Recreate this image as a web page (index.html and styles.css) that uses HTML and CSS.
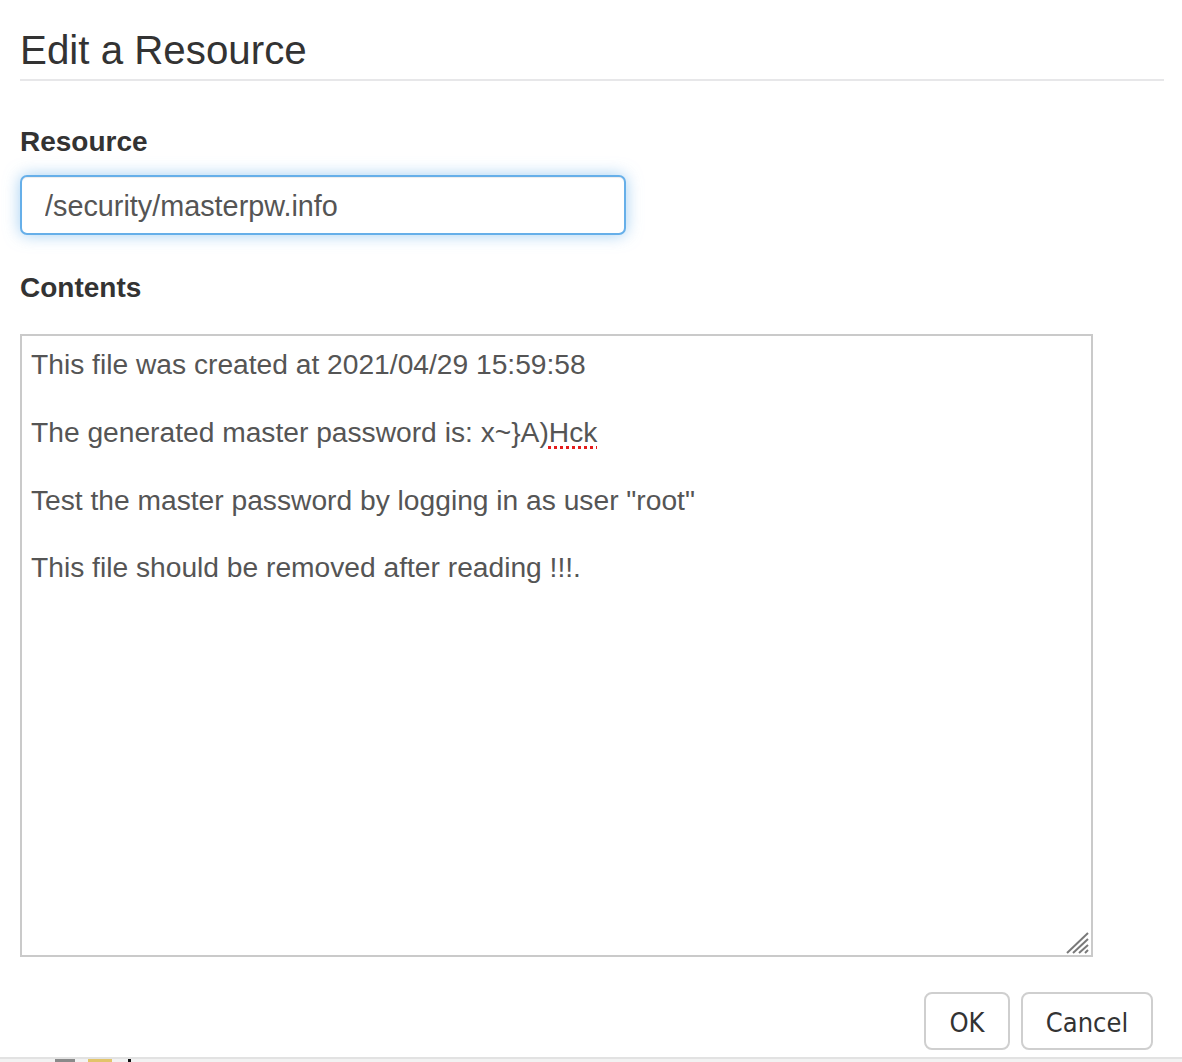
FILE: index.html
```html
<!DOCTYPE html>
<html lang="en">
<head>
<meta charset="utf-8">
<title>Edit a Resource</title>
<link rel="stylesheet" href="styles.css">
</head>
<body>
<div class="dialog">
  <h1 class="title">Edit a Resource</h1>
  <form class="form">
    <div class="field field-resource">
      <label class="label" for="res">Resource</label>
      <input class="input" id="res" type="text" value="/security/masterpw.info">
    </div>
    <div class="field field-contents">
      <label class="label">Contents</label>
      <div class="editor-wrap">
        <div class="editor">
          <p class="line">This file was created at 2021/04/29 15:59:58</p>
          <p class="line blank">&nbsp;</p>
          <p class="line">The generated master password is: x~}A)<span class="misspelled">Hck</span></p>
          <p class="line blank">&nbsp;</p>
          <p class="line">Test the master password by logging in as user "root"</p>
          <p class="line blank">&nbsp;</p>
          <p class="line">This file should be removed after reading !!!.</p>
        </div>
        <svg class="grip" width="28" height="22" viewBox="0 0 28 22" aria-hidden="true">
          <g stroke="#7a7a7a" stroke-width="2" stroke-linecap="butt">
            <line x1="5" y1="21" x2="26" y2="1"/>
            <line x1="11" y1="21" x2="26" y2="7"/>
            <line x1="17" y1="21" x2="26" y2="13"/>
            <line x1="23" y1="21" x2="26" y2="18"/>
          </g>
        </svg>
      </div>
    </div>
    <div class="actions">
      <button class="btn btn-ok" type="button">OK</button>
      <button class="btn btn-cancel" type="button">Cancel</button>
    </div>
  </form>
</div>
<div class="taskbar">
  <span class="tb-item tb-grey"></span>
  <span class="tb-item tb-yellow"></span>
  <span class="tb-item tb-black"></span>
</div>
</body>
</html>
```
FILE: styles.css
```css
html, body {
  margin: 0;
  padding: 0;
  height: 100%;
  overflow: hidden;
  background: #ffffff;
}

body {
  font-family: "Liberation Sans", Arial, Helvetica, sans-serif;
  color: #333333;
  display: flex;
  flex-direction: column;
}

.dialog {
  padding: 29px 18px 0 20px;
}

.title {
  margin: 0;
  font-size: 40.3px;
  line-height: 44px;
  font-weight: 300;
  color: #333333;
  padding-bottom: 6px;
  border-bottom: 2px solid #e7e7e9;
}

.form {
  display: flex;
  flex-direction: column;
}

.field {
  display: flex;
  flex-direction: column;
  align-items: flex-start;
}

.label {
  display: block;
  font-size: 28px;
  line-height: 40px;
  font-weight: bold;
  color: #333333;
}

.field-resource {
  margin-top: 41px;
}

.field-resource .label {
  margin-bottom: 13px;
}

.input {
  box-sizing: border-box;
  width: 606px;
  height: 60px;
  margin: 0;
  padding: 3px 23px 0;
  font-family: "Liberation Sans", Arial, Helvetica, sans-serif;
  font-size: 28.8px;
  color: #555555;
  background: #ffffff;
  border: 2px solid #66afe9;
  border-radius: 7px;
  outline: none;
  box-shadow: inset 0 1px 1px rgba(0, 0, 0, 0.075), 0 0 16px rgba(102, 175, 233, 0.6);
}

.field-contents {
  margin-top: 33px;
}

.field-contents .label {
  margin-bottom: 26px;
}

.editor-wrap {
  position: relative;
  width: 1073px;
  height: 623px;
}

.editor {
  box-sizing: border-box;
  width: 100%;
  height: 100%;
  padding: 12px 9px 10px;
  border: 2px solid #cacaca;
  background: #ffffff;
  font-family: "Liberation Sans", Arial, Helvetica, sans-serif;
  font-size: 28.2px;
  line-height: 33.9px;
  color: #555555;
  overflow: hidden;
}

.line {
  margin: 0;
  white-space: pre-wrap;
}

.misspelled {
  text-decoration: underline dotted #e51c1c;
  text-decoration-thickness: 3px;
  text-underline-offset: 4px;
}

.grip {
  position: absolute;
  right: 3px;
  bottom: 3px;
  display: block;
}

.actions {
  display: flex;
  justify-content: flex-end;
  gap: 11px;
  margin-top: 35px;
  padding-right: 11px;
}

.btn {
  box-sizing: border-box;
  height: 58px;
  margin: 0;
  padding: 3px 0 0;
  font-family: "Liberation Sans Narrow", "DejaVu Sans Condensed", "Liberation Sans", sans-serif;
  font-size: 27px;
  color: #333333;
  background: #ffffff;
  border: 2px solid #cfcfcf;
  border-radius: 8px;
}

.btn-ok {
  width: 86px;
}

.btn-cancel {
  width: 132px;
}

.taskbar {
  margin-top: 7px;
  height: 3px;
  border-top: 2px solid #e2e2e2;
  background: #f2f2f2;
  display: flex;
  align-items: flex-start;
  padding-left: 55px;
  gap: 13px;
}

.tb-item {
  display: block;
  height: 3px;
}

.tb-grey {
  width: 20px;
  background: #8a8a8a;
}

.tb-yellow {
  width: 24px;
  background: #e2c46a;
}

.tb-black {
  width: 3px;
  background: #111111;
  margin-left: 3px;
}
```
